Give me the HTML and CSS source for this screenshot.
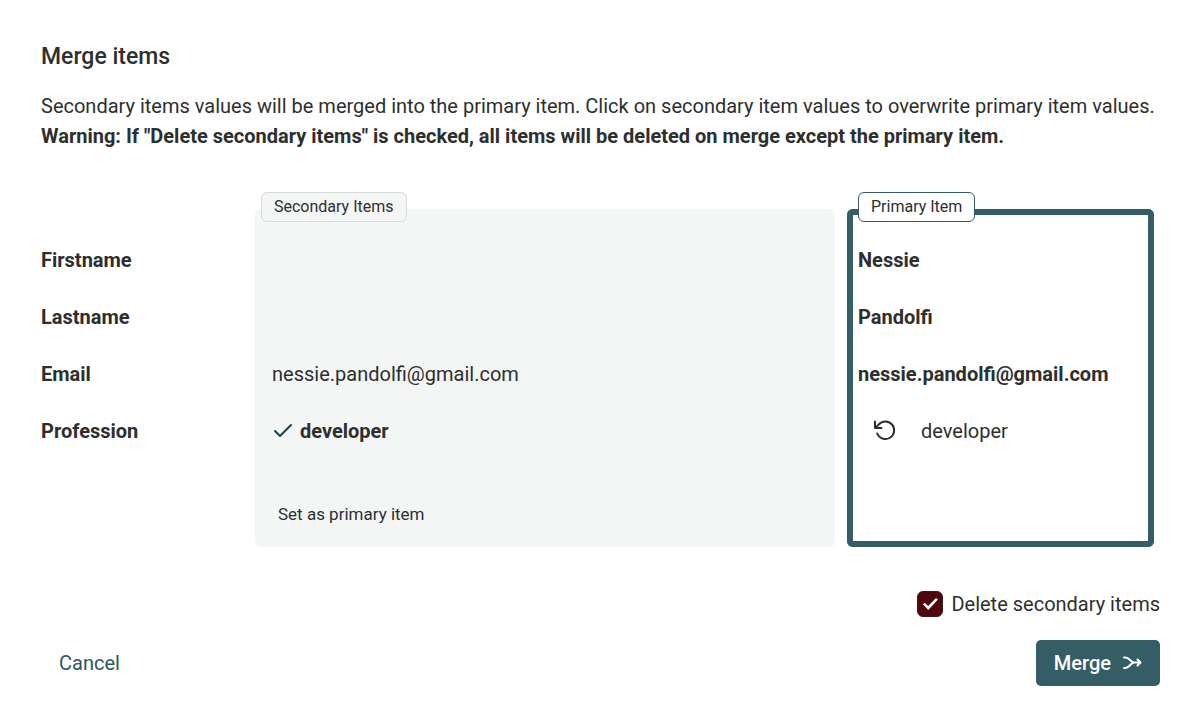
FILE: index.html
```html
<!DOCTYPE html>
<html lang="en">
<head>
  <meta charset="UTF-8">
  <meta name="viewport" content="width=device-width, initial-scale=1.0">
  <title>Merge items</title>
  <link rel="stylesheet" href="styles.css">
</head>
<body>

  <form class="merge">
    <h1 class="title">Merge items</h1>
    <p class="intro">
      Secondary items values will be merged into the primary item. Click on secondary item values to overwrite primary item values.<br>
      <strong>Warning: If "Delete secondary items" is checked, all items will be deleted on merge except the primary item.</strong>
    </p>

    <div class="table-wrap">
      <table class="items">
        <thead>
          <tr>
            <td class="name-col"></td>
            <th class="secondary" scope="col"><span class="badge">Secondary Items</span></th>
            <th class="primary" scope="col"><span class="badge">Primary Item</span></th>
          </tr>
        </thead>
        <tbody>
          <tr>
            <th scope="row">Firstname</th>
            <td class="secondary"></td>
            <td class="primary">Nessie</td>
          </tr>
          <tr>
            <th scope="row">Lastname</th>
            <td class="secondary"></td>
            <td class="primary">Pandolfi</td>
          </tr>
          <tr>
            <th scope="row">Email</th>
            <td class="secondary">nessie.pandolfi@gmail.com</td>
            <td class="primary">nessie.pandolfi@gmail.com</td>
          </tr>
          <tr>
            <th scope="row">Profession</th>
            <td class="secondary">
              <button type="button" class="value selected">
                <svg width="22" height="20" viewBox="0 0 22 20" aria-hidden="true"><path d="M3 10l5 5L19 4"/></svg>
                developer
              </button>
            </td>
            <td class="primary">
              <div class="overwritten">
                <button type="button" class="undo" aria-label="Undo">
                  <svg width="24" height="24" viewBox="0 0 24 24"><path d="M2 2.500v6.500h6.500M2.500 8.700L5.600 5.600A8.800 8.800 0 1 1 4.200 14.500"/></svg>
                </button>
                developer
              </div>
            </td>
          </tr>
        </tbody>
        <tfoot>
          <tr>
            <td></td>
            <td class="secondary"><button type="button" class="set-primary">Set as primary item</button></td>
            <td class="primary"></td>
          </tr>
        </tfoot>
      </table>
    </div>

    <div class="option">
      <input type="checkbox" id="deleteSecondary" class="checkbox" checked>
      <label for="deleteSecondary">Delete secondary items</label>
    </div>

    <div class="actions">
      <button type="button" class="btn btn-link">Cancel</button>
      <button type="submit" class="btn btn-main">
        Merge
        <svg width="19" height="16" viewBox="0 0 19 16" aria-hidden="true"><path d="M1 2.500h1.500c4 0 5 5 9 5h6M1 13h1.500c4 0 5-5.500 9-5.500M14.500 4.500l3 3-3 3"/></svg>
      </button>
    </div>
  </form>

</body>
</html>
```

FILE: styles.css
```css
body {
  font-family: Roboto, "Liberation Sans", sans-serif;
  font-size: 20px;
  line-height: 30px;
  color: #2d2f2e;
  background: #fff;
  margin: 0;
}

button {
  font: inherit;
  color: inherit;
  background: none;
  border: none;
  padding: 0;
  cursor: pointer;
}

svg {
  fill: none;
  stroke: currentColor;
  stroke-width: 2;
  stroke-linecap: round;
  stroke-linejoin: round;
}

.merge {
  padding: 42px 40px 40px 41px;
}

.title {
  font-size: 23px;
  font-weight: 500;
  line-height: 30px;
  margin: 0 0 19px;
}

.intro {
  margin: 0;
}

/* cancels the outer border-spacing of the table */
.table-wrap {
  margin: 58px -6px 0 -12px;
}

.items {
  width: 100%;
  table-layout: fixed;
  border-collapse: separate;
  border-spacing: 12px 0;
}

.items th,
.items td {
  height: 57px;
  padding: 0;
  text-align: left;
  vertical-align: middle;
  box-sizing: border-box;
}

.items thead th,
.items thead td {
  height: 22px;
  position: relative;
}

.items thead .name-col {
  width: 202px;
}

.items thead .primary {
  width: 307px;
}

.items .secondary {
  background: #f4f6f6;
  padding-left: 17px;
}

.items .primary {
  border: 0 solid #355d66;
  border-width: 0 6px;
  padding-left: 5px;
  font-weight: bold;
}

.items thead .primary {
  border-top-width: 6px;
}

.items thead .secondary,
.items thead .primary {
  border-radius: 6px 6px 0 0;
}

.items tfoot td {
  height: 88px;
  padding-top: 20px;
}

.items tfoot .secondary,
.items tfoot .primary {
  border-radius: 0 0 6px 6px;
}

.items tfoot .primary {
  border-bottom-width: 6px;
}

.badge {
  position: absolute;
  top: -17px;
  left: 6px;
  padding: 0 12px;
  border: 1px solid #d5dada;
  border-radius: 6px;
  background: #f4f6f6;
  font-size: 16px;
  font-weight: normal;
  line-height: 28px;
  white-space: nowrap;
}

.primary .badge {
  top: -23px;
  left: 5px;
  border-color: #355d66;
  background: #fff;
}

.value {
  display: flex;
  align-items: center;
  gap: 6px;
}

.value.selected {
  font-weight: bold;
}

.value svg {
  color: #1d444d;
}

.overwritten {
  display: flex;
  align-items: center;
  gap: 24px;
  padding-left: 15px;
  font-weight: normal;
}

.undo {
  display: flex;
}

.set-primary {
  font-size: 17px;
  padding-left: 6px;
}

.option {
  display: flex;
  align-items: center;
  justify-content: flex-end;
  gap: 8px;
  margin-top: 42px;
}

.checkbox {
  appearance: none;
  width: 26px;
  height: 26px;
  margin: 0;
  border: 1px solid #3c1a1e;
  border-radius: 6px;
  background: #50060c;
  display: grid;
  place-items: center;
}

.checkbox:checked::before {
  content: "";
  width: 15px;
  height: 12px;
  background: #fff;
  clip-path: polygon(0 53%, 12% 40%, 35% 66%, 87% 0, 100% 13%, 36% 100%);
}

.actions {
  display: flex;
  justify-content: space-between;
  margin-top: 21px;
}

.btn {
  display: flex;
  align-items: center;
  gap: 12px;
  height: 46px;
  padding: 0 18px;
  border-radius: 5px;
}

.btn-link {
  color: #2c5760;
}

.btn-main {
  background: #355d66;
  color: #fff;
  font-weight: 500;
}
```
